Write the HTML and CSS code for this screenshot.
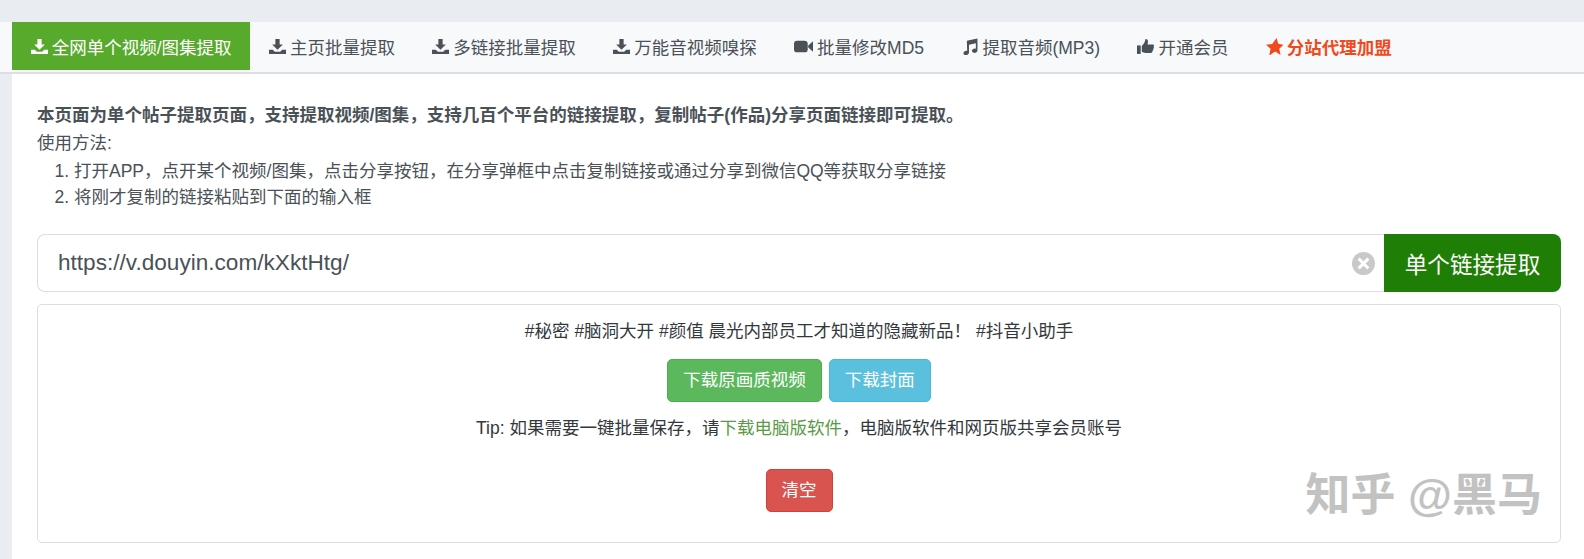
FILE: index.html
```html
<!DOCTYPE html>
<html lang="zh-CN">
<head>
    <meta charset="UTF-8">
    <title>全网单个视频/图集提取</title>
    <link rel="stylesheet" href="styles.css">
</head>
<body>
    <!-- Tabs -->
    <nav class="tabs">
        <a class="tab active">
            <svg class="icon" viewBox="0 0 16 16"><path d="M6 1h4v5h3l-5 5-5-5h3z"/><path d="M0 11h3.500l2 2h5l2-2H16v4H0z"/></svg>
            全网单个视频/图集提取
        </a>
        <a class="tab">
            <svg class="icon" viewBox="0 0 16 16"><path d="M6 1h4v5h3l-5 5-5-5h3z"/><path d="M0 11h3.500l2 2h5l2-2H16v4H0z"/></svg>
            主页批量提取
        </a>
        <a class="tab">
            <svg class="icon" viewBox="0 0 16 16"><path d="M6 1h4v5h3l-5 5-5-5h3z"/><path d="M0 11h3.500l2 2h5l2-2H16v4H0z"/></svg>
            多链接批量提取
        </a>
        <a class="tab">
            <svg class="icon" viewBox="0 0 16 16"><path d="M6 1h4v5h3l-5 5-5-5h3z"/><path d="M0 11h3.500l2 2h5l2-2H16v4H0z"/></svg>
            万能音视频嗅探
        </a>
        <a class="tab">
            <svg class="icon icon-wide" viewBox="0 0 18 16"><path d="M3 2.500h7a3 3 0 013 3v5a3 3 0 01-3 3H3a3 3 0 01-3-3v-5a3 3 0 013-3z"/><path d="M13.500 7L18 3v10l-4.500-4z"/></svg>
            批量修改MD5
        </a>
        <a class="tab">
            <svg class="icon" viewBox="0 0 16 16"><path d="M5.500 2.500L15.500 .5v11c0 1.500-1.400 2.500-2.900 2.500-1.300 0-2.300-.8-2.300-1.900 0-1.300 1.300-2.200 2.700-2.200.4 0 .7 0 1 .1V5L7.500 6.300v7.400c0 1.500-1.400 2.500-2.900 2.500-1.300 0-2.300-.8-2.300-1.900 0-1.300 1.300-2.200 2.700-2.200.3 0 .6 0 .8.100z"/></svg>
            提取音频(MP3)
        </a>
        <a class="tab">
            <svg class="icon" viewBox="0 0 16 16"><path d="M0 7h3.500v8H0z"/><path d="M4.500 7.500c1.800-1.500 3-3.500 3.500-6.500 1.500-.3 2.500 1 2.300 2.800L9.900 6H15c1.200 0 1.300 1.500.6 2 .6.700.4 1.700-.3 2.100.3.800 0 1.600-.7 1.900.1 1-.4 2-1.500 2H8c-1.500 0-2.500-.6-3.500-1z"/></svg>
            开通会员
        </a>
        <a class="tab tab-agent">
            <svg class="icon" viewBox="0 0 16 16"><path d="M10 0l1.500 5.300L16.500 6.500l-4 3.500 1.200 6-5-3.200L3 16.500l1.300-6.300L0 6.300l5.800-.6z"/></svg>
            分站代理加盟
        </a>
    </nav>

    <main class="content">
        <p class="intro-title">本页面为单个帖子提取页面，支持提取视频/图集，支持几百个平台的链接提取，复制帖子(作品)分享页面链接即可提取。</p>
        <p class="intro">使用方法:</p>
        <ol class="steps">
            <li>打开APP，点开某个视频/图集，点击分享按钮，在分享弹框中点击复制链接或通过分享到微信QQ等获取分享链接</li>
            <li>将刚才复制的链接粘贴到下面的输入框</li>
        </ol>

        <!-- Link input -->
        <div class="url-row">
            <div class="url-box">
                <input class="url-input" type="text" value="https://v.douyin.com/kXktHtg/">
                <svg class="clear-icon" viewBox="0 0 24 24"><circle cx="12" cy="12" r="12" fill="#c9c9c9"/><path d="M7 7l10 10M17 7L7 17" stroke="#fff" stroke-width="3.200" fill="none"/></svg>
            </div>
            <button class="extract-btn">单个链接提取</button>
        </div>

        <!-- Result -->
        <section class="result">
            <p class="result-title">#秘密 #脑洞大开 #颜值 晨光内部员工才知道的隐藏新品！ #抖音小助手</p>
            <div class="result-actions">
                <a class="btn btn-green">下载原画质视频</a>
                <a class="btn btn-blue">下载封面</a>
            </div>
            <p class="tip">Tip: 如果需要一键批量保存，请<a class="tip-link">下载电脑版软件</a>，电脑版软件和网页版共享会员账号</p>
            <a class="btn btn-red">清空</a>
            <div class="watermark">知乎 @黑马</div>
        </section>
    </main>
</body>
</html>
```

FILE: styles.css
```css
* {
    margin: 0;
    padding: 0;
    box-sizing: border-box;
}

body {
    background: #e9edf2;
    color: #4a5157;
    font-family: "Liberation Sans", "Noto Sans CJK SC", sans-serif;
    font-size: 17.5px;
    padding-top: 22px;
    overflow: hidden;
    height: 559px;
}

/* Tabs */
.tabs {
    display: flex;
    height: 52px;
    padding: 0 0 2px 12px;
    background: #f8f9fb;
    border-bottom: 2px solid #dcdee1;
}

.tab {
    display: flex;
    align-items: center;
    gap: 4px;
    padding: 0 18.7px;
    color: #4a5157;
    white-space: nowrap;
}

.tab.active {
    background: #58aa2d;
    color: #fff;
}

.tab-agent {
    color: #f04a1c;
    font-weight: bold;
}

.icon {
    width: 17px;
    height: 17px;
    fill: currentColor;
    flex: none;
}

.icon-wide {
    width: 19px;
}

/* Intro */
.content {
    margin-left: 12px;
    height: 485px;
    background: #fff;
    padding: 27px 23px 0 25px;
}

.intro-title {
    font-weight: bold;
    line-height: 28px;
}

.intro {
    line-height: 29px;
}

.steps {
    padding-left: 37px;
    line-height: 26px;
}

/* Link input */
.url-row {
    display: flex;
    height: 58px;
    margin-top: 24px;
}

.url-box {
    flex: 1;
    display: flex;
    align-items: center;
    border: 1px solid #dedede;
    border-right: 0;
    border-radius: 8px 0 0 8px;
    padding-left: 20px;
    padding-right: 9px;
}

.url-input {
    flex: 1;
    border: 0;
    outline: 0;
    color: #4a5157;
    font-family: "Liberation Sans", sans-serif;
    font-size: 22.6px;
}

.clear-icon {
    width: 23px;
    height: 23px;
    flex: none;
}

.extract-btn {
    width: 177px;
    border: 0;
    border-radius: 0 8px 8px 0;
    background: #1f7e05;
    color: #fff;
    font-family: inherit;
    font-size: 22.6px;
}

/* Result */
.result {
    position: relative;
    height: 239px;
    margin-top: 12px;
    border: 1px solid #dedede;
    border-radius: 5px;
    padding-top: 12px;
    text-align: center;
    color: #33383c;
}

.result-title {
    line-height: 28px;
}

.result-actions {
    display: flex;
    justify-content: center;
    gap: 7px;
    margin-top: 14px;
}

.btn {
    display: inline-block;
    height: 43px;
    line-height: 41px;
    padding: 0 15px;
    border: 1px solid transparent;
    border-radius: 5px;
    color: #fff;
}

.btn-green {
    background: #5cb85c;
    border-color: #4cae4c;
}

.btn-blue {
    background: #5bc0de;
    border-color: #46b8da;
}

.btn-red {
    background: #d9534f;
    border-color: #d43f3a;
}

.tip {
    line-height: 28px;
    margin: 12px 0 27px;
}

.tip-link {
    color: #5a9a46;
}

.watermark {
    position: absolute;
    right: 18px;
    bottom: 20px;
    font-size: 45px;
    font-weight: bold;
    line-height: 52px;
    color: #c2c2c2;
    white-space: nowrap;
}
```
